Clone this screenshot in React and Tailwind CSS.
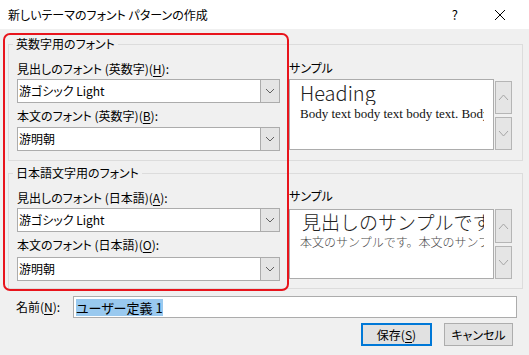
import React from 'react';

const ui = "font-['Noto_Sans_CJK_JP','Noto_Sans',sans-serif] [font-feature-settings:'palt']";

function Key({ children }) {
  return <span className="underline underline-offset-2">{children}</span>;
}

function Chevron({ up, color = '#606060', w = 8, h = 4 }) {
  return (
    <svg width={w + 2} height={h + 2} viewBox={`0 0 ${w + 2} ${h + 2}`}>
      <path
        d={up ? `M1 ${h + 1} L${w / 2 + 1} 1 L${w + 1} ${h + 1}` : `M1 1 L${w / 2 + 1} ${h + 1} L${w + 1} 1`}
        fill="none"
        stroke={color}
        strokeWidth="1"
      />
    </svg>
  );
}

function Combo({ value, className = '' }) {
  return (
    <div className={`flex h-[24px] w-[263px] items-stretch border border-[#acacac] bg-white ${className}`}>
      <div className="flex flex-1 items-center pl-[1px] text-[12px] text-black">{value}</div>
      <div className="flex w-[19px] items-center justify-center border-l border-[#acacac] bg-[#e5e5e5]">
        <Chevron />
      </div>
    </div>
  );
}

function Spin({ upH, downH, top }) {
  return (
    <div className={`ml-[1px] flex w-[17px] shrink-0 flex-col ${top}`}>
      <div className={`flex items-center justify-center border border-[#b5b5b5] bg-[#e5e5e5] ${upH}`}>
        <Chevron up color="#a6a6a6" w={9} h={5} />
      </div>
      <div className={`mt-[3px] flex items-center justify-center border border-[#b5b5b5] bg-[#e5e5e5] ${downH}`}>
        <Chevron color="#a6a6a6" w={9} h={5} />
      </div>
    </div>
  );
}

export default function App() {
  return (
    <div className={`relative h-[355px] w-[529px] overflow-hidden bg-[#f0f0f0] text-black ${ui}`}>
      {/* title bar */}
      <div className="flex h-[29px] items-center bg-white pl-[8px] text-[12px]">
        <span className="flex-1">新しいテーマのフォント パターンの作成</span>
        <span className="mr-[36px] text-[13px]">?</span>
        <svg width="12" height="12" viewBox="0 0 12 12" className="mr-[23px]">
          <path d="M1 1 L11 11 M11 1 L1 11" stroke="#000" strokeWidth="1" />
        </svg>
      </div>

      {/* latin fonts */}
      <fieldset className="ml-[8px] mt-[7px] w-[515px] min-w-0 border border-[#dcdcdc]">
        <legend className="ml-[4px] px-[3px] text-[12px] leading-[16px]">英数字用のフォント</legend>
        <div className="flex pl-[8px] pr-[10px]">
          <div className="flex w-[263px] shrink-0 flex-col pb-[9px] pt-[9px] text-[12px]">
            <div className="leading-[16px]">見出しのフォント (英数字)(<Key>H</Key>):</div>
            <Combo value="游ゴシック Light" className="mt-[2px]" />
            <div className="mt-[5px] leading-[16px]">本文のフォント (英数字)(<Key>B</Key>):</div>
            <Combo value="游明朝" className="mt-[3px]" />
          </div>
          <div className="ml-[9px] flex min-w-0 flex-1 flex-col pt-[8px]">
            <div className="text-[12px] leading-[16px]">サンプル</div>
            <div className="mt-[3px] flex items-start">
              <div className="h-[71px] min-w-0 flex-1 overflow-hidden whitespace-nowrap border border-[#acacac] bg-white pl-[10px] pr-[9px] pt-[1px]">
                <div className="overflow-hidden font-['Noto_Sans_CJK_JP','Noto_Sans',sans-serif] text-[20px] font-light leading-[24px] text-[#222]">Heading</div>
                <div className="mt-[1px] overflow-hidden font-['Liberation_Serif',serif] text-[13px] leading-[16px] text-[#111]">Body text body text body text. Body text body text.</div>
              </div>
              <Spin top="pt-[2px]" upH="h-[33px]" downH="h-[33px]" />
            </div>
          </div>
        </div>
      </fieldset>

      {/* japanese fonts */}
      <fieldset className="ml-[8px] mt-[4px] w-[515px] min-w-0 border border-[#dcdcdc]">
        <legend className="ml-[4px] px-[3px] text-[12px] leading-[16px]">日本語文字用のフォント</legend>
        <div className="flex pl-[8px] pr-[10px]">
          <div className="flex w-[263px] shrink-0 flex-col pb-[7px] pt-[9px] text-[12px]">
            <div className="leading-[16px]">見出しのフォント (日本語)(<Key>A</Key>):</div>
            <Combo value="游ゴシック Light" className="mt-[2px]" />
            <div className="mt-[5px] leading-[16px]">本文のフォント (日本語)(<Key>O</Key>):</div>
            <Combo value="游明朝" className="mt-[4px]" />
          </div>
          <div className="ml-[9px] flex min-w-0 flex-1 flex-col pt-[7px]">
            <div className="text-[12px] leading-[16px]">サンプル</div>
            <div className="mt-[5px] flex items-start">
              <div className="h-[70px] min-w-0 flex-1 overflow-hidden whitespace-nowrap border border-[#acacac] bg-white pl-[12px] pr-[9px] [font-feature-settings:normal]">
                <div className="overflow-hidden font-['Noto_Sans_CJK_JP',sans-serif] text-[19px] font-light leading-[24px] text-[#222]">見出しのサンプルです</div>
                <div className="-ml-[2px] overflow-hidden font-['Noto_Sans_CJK_JP',sans-serif] text-[12px] font-light leading-[16px] text-[#4a4a4a]">本文のサンプルです。本文のサンプルです。</div>
              </div>
              <Spin top="" upH="h-[34px]" downH="h-[33px]" />
            </div>
          </div>
        </div>
      </fieldset>

      {/* name */}
      <div className="mt-[7px] flex items-center pl-[16px] text-[12px]">
        <div className="w-[57px]">名前(<Key>N</Key>):</div>
        <div className="flex h-[22px] w-[444px] items-center border border-[#acacac] bg-white pl-[2px]">
          <span className="bg-[#99c9ef] text-[13px] leading-[17px]">ユーザー定義 1</span>
        </div>
      </div>

      {/* buttons */}
      <div className="mt-[5px] flex justify-end gap-[12px] pr-[16px] text-[12px]">
        <button className="flex h-[23px] w-[71px] items-center justify-center border-2 border-[#0078d7] bg-[#e1e1e1]">
          保存(<Key>S</Key>)
        </button>
        <button className="flex h-[23px] w-[69px] items-center justify-center border border-[#adadad] bg-[#e1e1e1]">
          キャンセル
        </button>
      </div>

      {/* annotation outline */}
      <div className="pointer-events-none absolute left-[3px] top-[33px] h-[258px] w-[286px] rounded-[7px] border-2 border-[#e8141c]" />
    </div>
  );
}
